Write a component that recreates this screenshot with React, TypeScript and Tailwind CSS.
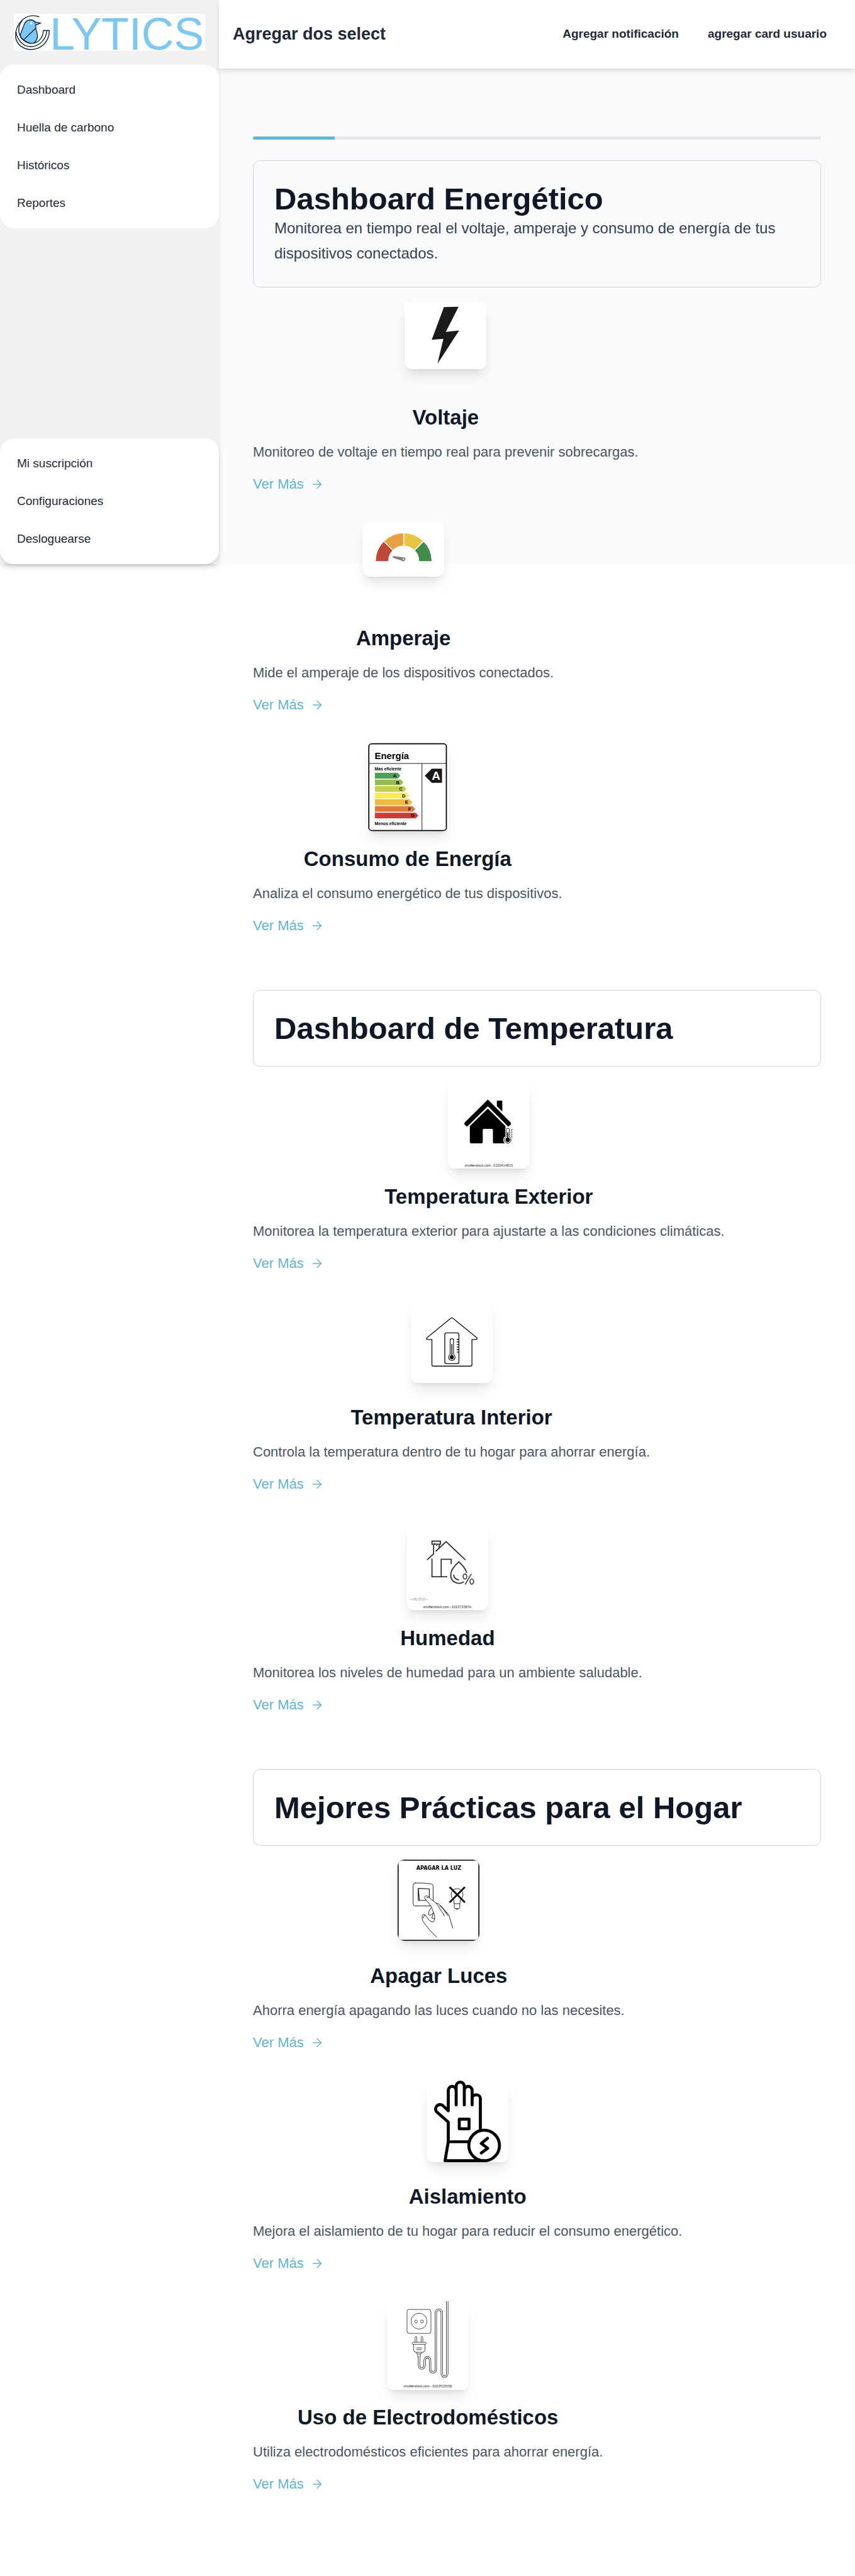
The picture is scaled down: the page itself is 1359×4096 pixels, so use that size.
import type { ReactNode } from "react";
import { ArrowRight } from "lucide-react";

const MAIN_NAV = ["Dashboard", "Huella de carbono", "Históricos", "Reportes"];
const ACCOUNT_NAV = ["Mi suscripción", "Configuraciones", "Desloguearse"];

function Logo() {
  return (
    <svg viewBox="36 21 1344 261" className="block w-full overflow-visible bg-white" role="img" aria-label="Clytics">
      <g fill="none" stroke="#06203a" strokeWidth="6" strokeLinejoin="miter">
        <path
          d="M152 63Q186 64 190 94V122Q196 146 201 165Q208 200 176 228Q125 232 84 184Q78 172 90 145L107 100Q120 64 152 63Z"
          fill="#7cc8f3"
        />
        <path d="M190 122L104 205" />
        <path d="M186 78L223 86L191 100" fill="#7cc8f3" />
        <path d="M214 42Q150 18 98 62Q44 112 48 182C54 238 104 272 158 272C230 270 286 215 285 138H243C242 182 215 222 172 226" />
        <path d="M267 138C264 202 216 250 155 252C98 250 60 206 52 150" />
        <path d="M96 64Q62 108 73 156Q82 190 104 207Q130 228 158 229" />
      </g>
      <circle cx="158" cy="87" r="8" fill="#fff" />
      <text x="289" y="273" fontSize="316" fill="#7cc8f3" fontFamily="'Liberation Sans', Arial, sans-serif">
        LYTICS
      </text>
    </svg>
  );
}

function BoltPicture() {
  return (
    <svg viewBox="0 0 192 160" className="block w-full">
      <path d="M92.5 13.6L126.9 13L96.9 72.1L128.2 68.8L77.2 146.9L91.2 88.3L63.8 90.5Z" fill="#1a1a1a" />
    </svg>
  );
}

function GaugePicture() {
  return (
    <svg viewBox="0 0 192 128" className="block w-full">
      <path d="M31.5 92A65.5 65.5 0 0 1 50.7 45.7L71.2 66.2A36.5 36.5 0 0 0 60.5 92Z" fill="#bf4737" />
      <path d="M50.7 45.7A65.5 65.5 0 0 1 97 26.5V55.5A36.5 36.5 0 0 0 71.2 66.2Z" fill="#e9a03f" />
      <path d="M97 26.5A65.5 65.5 0 0 1 143.3 45.7L122.8 66.2A36.5 36.5 0 0 0 97 55.5Z" fill="#e9c546" />
      <path d="M143.3 45.7A65.5 65.5 0 0 1 162.5 92H133.5A36.5 36.5 0 0 0 122.8 66.2Z" fill="#418b4b" />
      <path d="M49 44L73 68M97 25V57M145 44L121 68" stroke="#fff" strokeWidth="2.4" />
      <path d="M73 80L98 83Q102 84 101 88Q99 93 95 92L72 84Q69 81 73 80Z" fill="#808080" />
      <circle cx="96.6" cy="87.3" r="1.8" fill="#fff" />
    </svg>
  );
}

const RATINGS = [
  { letter: "A", color: "#4da056" },
  { letter: "B", color: "#97bb55" },
  { letter: "C", color: "#c4cf52" },
  { letter: "D", color: "#fbec51" },
  { letter: "E", color: "#efbb43" },
  { letter: "F", color: "#de7b3b" },
  { letter: "G", color: "#d33838" },
];

function EnergyLabelPicture() {
  return (
    <svg viewBox="0 0 192 208" className="block w-full" fontFamily="'Liberation Sans', Arial, sans-serif" fontWeight="700">
      <rect x="4.8" y="2.3" width="182" height="204" rx="6" fill="#fff" stroke="#000" strokeWidth="2.6" />
      <text x="18.5" y="38" fontSize="22">Energía</text>
      <path d="M5 48.7H187M129.6 48.7V206" stroke="#111" strokeWidth="1.4" />
      <text x="18.5" y="65" fontSize="10">Más eficiente</text>
      {RATINGS.map(({ letter, color }, i) => {
        const tip = 79 + 7 * i;
        const y = 77.4 + 15.6 * i;
        return (
          <g key={letter}>
            <path d={`M19 ${y - 6.7}H${tip - 6.5}L${tip} ${y}L${tip - 6.5} ${y + 6.7}H19Z`} fill={color} />
            <text x={tip - 13.5} y={y + 4} fontSize="11" textAnchor="middle">{letter}</text>
          </g>
        );
      })}
      <text x="18.5" y="193" fontSize="10">Menos eficiente</text>
      <path d="M136.2 77.5L152.6 61H176.5V94H152.6Z" fill="#1a181a" />
      <text x="162.5" y="87" fontSize="28" fill="#fff" textAnchor="middle">A</text>
    </svg>
  );
}

function Credit({ code }: { code: string }) {
  return (
    <text x="96" y="203" fontSize="8" fill="#222" textAnchor="middle" fontFamily="Lato, sans-serif">
      shutterstock.com · {code}
    </text>
  );
}

function OutdoorPicture() {
  return (
    <svg viewBox="0 0 192 207" className="block w-full">
      <path d="M114.8 60V49Q115 47.2 117 47.2H125.6Q127.6 47.2 127.6 49V73Z" />
      <path d="M93.7 44.8L146.5 98Q149 101.5 147 104L141.4 108.5L93.7 60.4L45 108.5L39.5 104Q37.5 101.5 40 98Z" />
      <path d="M93.7 66L135 107V145Q135 147.7 132 147.7H108Q105.6 147.7 105.6 145V116Q105.6 113.7 103 113.7H84Q81.7 113.7 81.7 116V145Q81.7 147.7 79 147.7H54.5Q51.4 147.7 51.4 145V107Z" />
      <path d="M134.5 116A6 6 0 0 1 146.5 116V131A10.5 10.5 0 1 1 134.5 131Z" fill="#fff" />
      <path d="M136.7 116A3.8 3.8 0 0 1 144.3 116V133A7.6 7.6 0 1 1 136.7 133Z" fill="#fff" stroke="#000" strokeWidth="1.4" />
      <circle cx="140.5" cy="139.5" r="5" />
      <path d="M140.5 122V138" stroke="#000" strokeWidth="2.6" />
      <path d="M147.5 115.5H152M147.5 118.5H150M147.5 121.5H152M147.5 124.5H150M147.5 127.5H152M147.5 130.5H150M147.5 133H152" stroke="#000" strokeWidth="1" />
      <Credit code="1220414815" />
    </svg>
  );
}

function IndoorPicture() {
  return (
    <svg viewBox="0 0 192 192" className="block w-full">
      <g fill="none" stroke="#111" strokeWidth="2" strokeLinejoin="round" strokeLinecap="round">
        <path d="M98 39.5L155.6 86.5Q156 89.5 154 90H143.5V149Q143.5 152.5 140 152.5H53Q49.5 152.5 49.5 149V90H38.5Q36.5 89.5 37 86.5L94.5 39.5Q96.3 38.3 98 39.5Z" />
        <rect x="79.7" y="74.3" width="33.2" height="72.4" rx="4" />
        <path d="M92.3 92A4 4 0 0 1 100.3 92V125A7.6 7.6 0 1 1 92.3 125Z" strokeWidth="1.7" />
        <path d="M96.3 101V128" strokeWidth="2.2" />
        <path d="M108.5 89.7H112M108.5 95.7H112M108.5 101.7H112M108.5 107.7H112M108.5 113.7H112M108.5 119.5H112" />
      </g>
      <circle cx="96.3" cy="131.3" r="4.7" fill="#000" />
    </svg>
  );
}

function HumidityPicture() {
  return (
    <svg viewBox="0 0 192 207" className="block w-full">
      <g fill="none" stroke="#333" strokeWidth="2.7" strokeLinecap="round">
        <path d="M49.1 88.4L63.8 75V52.5M60 45H79.7V52.2H60ZM77 52.5V61.5" />
        <path d="M66 52V50M71 52V56" strokeWidth="2" />
        <path d="M69.5 68.3L93.1 46.2L137.8 88.4" />
        <path d="M60 87V128.6H95M81.6 128.6V87.7H105.2V97.8" />
        <path d="M141 118.5Q138 107 123.1 93.8Q104 110 104 125C104 140 120 149 134 141" />
        <path d="M111 124.6Q112 134 122.4 136" />
        <ellipse cx="137.5" cy="128" rx="4.3" ry="6" strokeWidth="2.3" />
        <ellipse cx="153.5" cy="140" rx="4.3" ry="6" strokeWidth="2.3" />
        <path d="M152 122.5L138.4 146" strokeWidth="2.3" />
      </g>
      <text x="8" y="184.5" fontSize="11" fill="#999" fontFamily="'Open Sans', sans-serif">–vector–</text>
      <Credit code="2022725876" />
    </svg>
  );
}

function LightSwitchPicture() {
  return (
    <svg viewBox="48 24 576 573" className="block w-full bg-black">
      <rect x="55" y="31" width="562" height="558" rx="14" fill="#fff" />
      <text x="338" y="94" fontSize="36" fontWeight="700" textAnchor="middle" fontFamily="'DejaVu Sans', sans-serif">
        APAGAR LA LUZ
      </text>
      <g fill="none" stroke="#111" strokeWidth="4" strokeLinejoin="round" strokeLinecap="round">
        <path d="M172 188Q230 186 286 195Q298 198 298 212V335Q298 350 282 350H172Q157 349 157 334V206Q157 190 172 188Z" />
        <path d="M193 226L271 230V311H193ZM193 226L202 310" strokeWidth="5" />
        <path
          d="M437 507L408 412L352 350Q338 331 318 330L268 290Q260 277 246 279Q234 284 240 298L284 352L308 415Q314 462 292 464Q270 458 254 430Q240 404 225 412Q216 428 226 458Q270 520 323 571"
          fill="#fff"
        />
        <path d="M282 362Q262 390 267 413Q280 422 295 402M300 398L289 436L309 440M229 434Q230 418 243 414M254 292Q262 290 266 286" />
        <path d="M318 330Q338 350 350 378Q372 402 376 420M345 348Q372 366 386 394L402 418M352 352L392 400" />
        <path d="M444 308Q425 292 425 270A42 42 0 0 1 509 270Q509 292 490 308L487 334H447ZM447 334V358Q447 368 456 369H478Q486 368 486 358V334M458 370Q466 380 475 370" />
        <path d="M414 217L522 325M522 217L414 325" strokeWidth="13" strokeLinecap="butt" />
      </g>
    </svg>
  );
}

function GlovePicture() {
  return (
    <svg viewBox="0 0 192 192" className="block w-full">
      <g fill="none" stroke="#000" strokeWidth="7" strokeLinejoin="round" strokeLinecap="round">
        <path d="M51 71V24A9.2 10 0 0 1 69.5 24V57.5V14A9.5 10 0 0 1 88.6 14V57.5V14A9.5 10 0 0 0 88.6 14V57.5V24A9.2 10 0 0 1 107 24V57.5V42A9.6 8 0 0 1 126.3 42V118" />
        <path d="M51 71L37.6 58.5A10.5 10.5 0 0 0 23 73L51 98V144H99M51 144L43.4 188.5H135" />
        <rect x="76.8" y="91" width="23" height="22.5" />
        <circle cx="135.2" cy="152.8" r="36" />
        <path d="M143 136L128.5 148L143.5 159.4L128.5 170.5" />
      </g>
    </svg>
  );
}

function PlugPicture() {
  const cord =
    "M75.3 130V150A6.6 8 0 0 0 88.6 150V140A6.4 8 0 0 1 101.4 140V160A6.7 7 0 0 0 114.8 160V27A7 7 0 0 1 128.8 27V170A6.4 7 0 0 0 141.6 170V-4";
  return (
    <svg viewBox="0 0 192 208" className="block w-full">
      <g fill="none" stroke="#333" strokeWidth="1.3">
        <rect x="47.2" y="19.4" width="56.1" height="56.3" rx="5" />
        <circle cx="75.3" cy="46.9" r="18.7" />
        <circle cx="68.2" cy="47.5" r="3.3" />
        <circle cx="82.3" cy="47.5" r="3.3" />
        <path d="M66.2 96V85A2 2 0 0 1 70.2 85V96M80.3 96V85A2 2 0 0 1 84.3 85V96" />
        <rect x="59.3" y="96.4" width="32.5" height="4.8" rx="2" />
        <path d="M62.5 101.2V115Q63 119.5 68 120H84Q89 119.5 89.3 115V101.2M69 109.8H82M69 113.8H82M68 120L71 124H80L83 120M72 124V130.5H78.6V124" />
      </g>
      <path d={cord} fill="none" stroke="#333" strokeWidth="5.2" />
      <path d={cord} fill="none" stroke="#fff" strokeWidth="2.8" />
      <path d={cord} fill="none" stroke="#999" strokeWidth="0.6" />
      <Credit code="2022923558" />
    </svg>
  );
}

type Feature = { title: string; text: string; picture: ReactNode };
type Section = { title: string; text?: string; features: Feature[] };

const SECTIONS: Section[] = [
  {
    title: "Dashboard Energético",
    text: "Monitorea en tiempo real el voltaje, amperaje y consumo de energía de tus dispositivos conectados.",
    features: [
      { title: "Voltaje", text: "Monitoreo de voltaje en tiempo real para prevenir sobrecargas.", picture: <BoltPicture /> },
      { title: "Amperaje", text: "Mide el amperaje de los dispositivos conectados.", picture: <GaugePicture /> },
      { title: "Consumo de Energía", text: "Analiza el consumo energético de tus dispositivos.", picture: <EnergyLabelPicture /> },
    ],
  },
  {
    title: "Dashboard de Temperatura",
    features: [
      { title: "Temperatura Exterior", text: "Monitorea la temperatura exterior para ajustarte a las condiciones climáticas.", picture: <OutdoorPicture /> },
      { title: "Temperatura Interior", text: "Controla la temperatura dentro de tu hogar para ahorrar energía.", picture: <IndoorPicture /> },
      { title: "Humedad", text: "Monitorea los niveles de humedad para un ambiente saludable.", picture: <HumidityPicture /> },
    ],
  },
  {
    title: "Mejores Prácticas para el Hogar",
    features: [
      { title: "Apagar Luces", text: "Ahorra energía apagando las luces cuando no las necesites.", picture: <LightSwitchPicture /> },
      { title: "Aislamiento", text: "Mejora el aislamiento de tu hogar para reducir el consumo energético.", picture: <GlovePicture /> },
      { title: "Uso de Electrodomésticos", text: "Utiliza electrodomésticos eficientes para ahorrar energía.", picture: <PlugPicture /> },
    ],
  },
];

function NavCard({ items, label, className = "" }: { items: string[]; label: string; className?: string }) {
  return (
    <nav aria-label={label} className={`rounded-[22px] bg-white py-[10px] ${className}`}>
      <ul>
        {items.map((item) => (
          <li key={item}>
            <a href="#" className="flex h-[60px] items-center px-[27px] text-[19px] text-gray-800">
              {item}
            </a>
          </li>
        ))}
      </ul>
    </nav>
  );
}

function FeatureItem({ title, text, picture }: Feature) {
  return (
    <article className="w-fit">
      <div className="flex flex-col items-center">
        <div className="h-[163px]">
          <div className="w-[130px] overflow-hidden rounded-[11px] bg-white shadow-[0_14px_20px_-4px_rgba(0,0,0,0.1),0_5px_8px_-5px_rgba(0,0,0,0.1)]">
            {picture}
          </div>
        </div>
        <h3 className="text-[33px] leading-[43px] font-bold text-gray-900">{title}</h3>
      </div>
      <p className="mt-[17px] text-[22px] leading-[33px] text-gray-600">{text}</p>
      <a href="#" className="mt-[18px] inline-flex items-center text-[22px] leading-[33px] text-[#62b4d2]">
        Ver Más
        <ArrowRight className="ml-[10px] size-[22px]" strokeWidth={1.5} />
      </a>
    </article>
  );
}

export default function App() {
  return (
    <div className="flex items-start bg-white font-['Liberation_Sans',Arial,sans-serif]">
      <aside className="relative z-10 flex h-[897px] w-[348px] shrink-0 flex-col bg-[#f1f1f1] shadow-[0_5px_8px_-1px_rgba(0,0,0,0.1),0_3px_5px_-3px_rgba(0,0,0,0.1)]">
        <div className="p-[22px]">
          <Logo />
        </div>
        <NavCard label="Principal" items={MAIN_NAV} />
        <NavCard
          label="Cuenta"
          items={ACCOUNT_NAV}
          className="mt-auto shadow-[0_5px_8px_-1px_rgba(0,0,0,0.1),0_3px_5px_-3px_rgba(0,0,0,0.1)]"
        />
      </aside>

      <div className="min-w-0 flex-1 bg-[linear-gradient(#f9fafc,#f9fafc)] bg-[length:100%_897px] bg-no-repeat">
        <header className="relative z-20 flex h-[109px] items-center justify-between bg-white pr-[45px] pl-[22px] font-bold text-gray-800 shadow-[0_5px_8px_-1px_rgba(0,0,0,0.1),0_3px_5px_-3px_rgba(0,0,0,0.1)]">
          <h1 className="text-[27px]">Agregar dos select</h1>
          <div className="flex gap-[46px] text-[19px]">
            <span>Agregar notificación</span>
            <span>agregar card usuario</span>
          </div>
        </header>

        <main className="px-[54px] pt-[108px] pb-[43px]">
          <div className="mb-[33px] h-[5px] overflow-hidden rounded-[3px] bg-gray-200">
            <div className="h-full w-[130px] bg-[#66b5d3]" />
          </div>

          {SECTIONS.map((section) => (
            <section key={section.title} className="mb-[42px]">
              <div className="rounded-[11px] border border-gray-300 p-[33px]">
                <h2 className="text-[49px] leading-[54px] font-bold text-gray-900">{section.title}</h2>
                {section.text && <p className="text-[24px] leading-[40px] text-gray-700">{section.text}</p>}
              </div>
              <div className="mt-[22px] flex flex-col gap-[44px] pb-[44px]">
                {section.features.map((feature) => (
                  <FeatureItem key={feature.title} {...feature} />
                ))}
              </div>
            </section>
          ))}
        </main>
      </div>
    </div>
  );
}
